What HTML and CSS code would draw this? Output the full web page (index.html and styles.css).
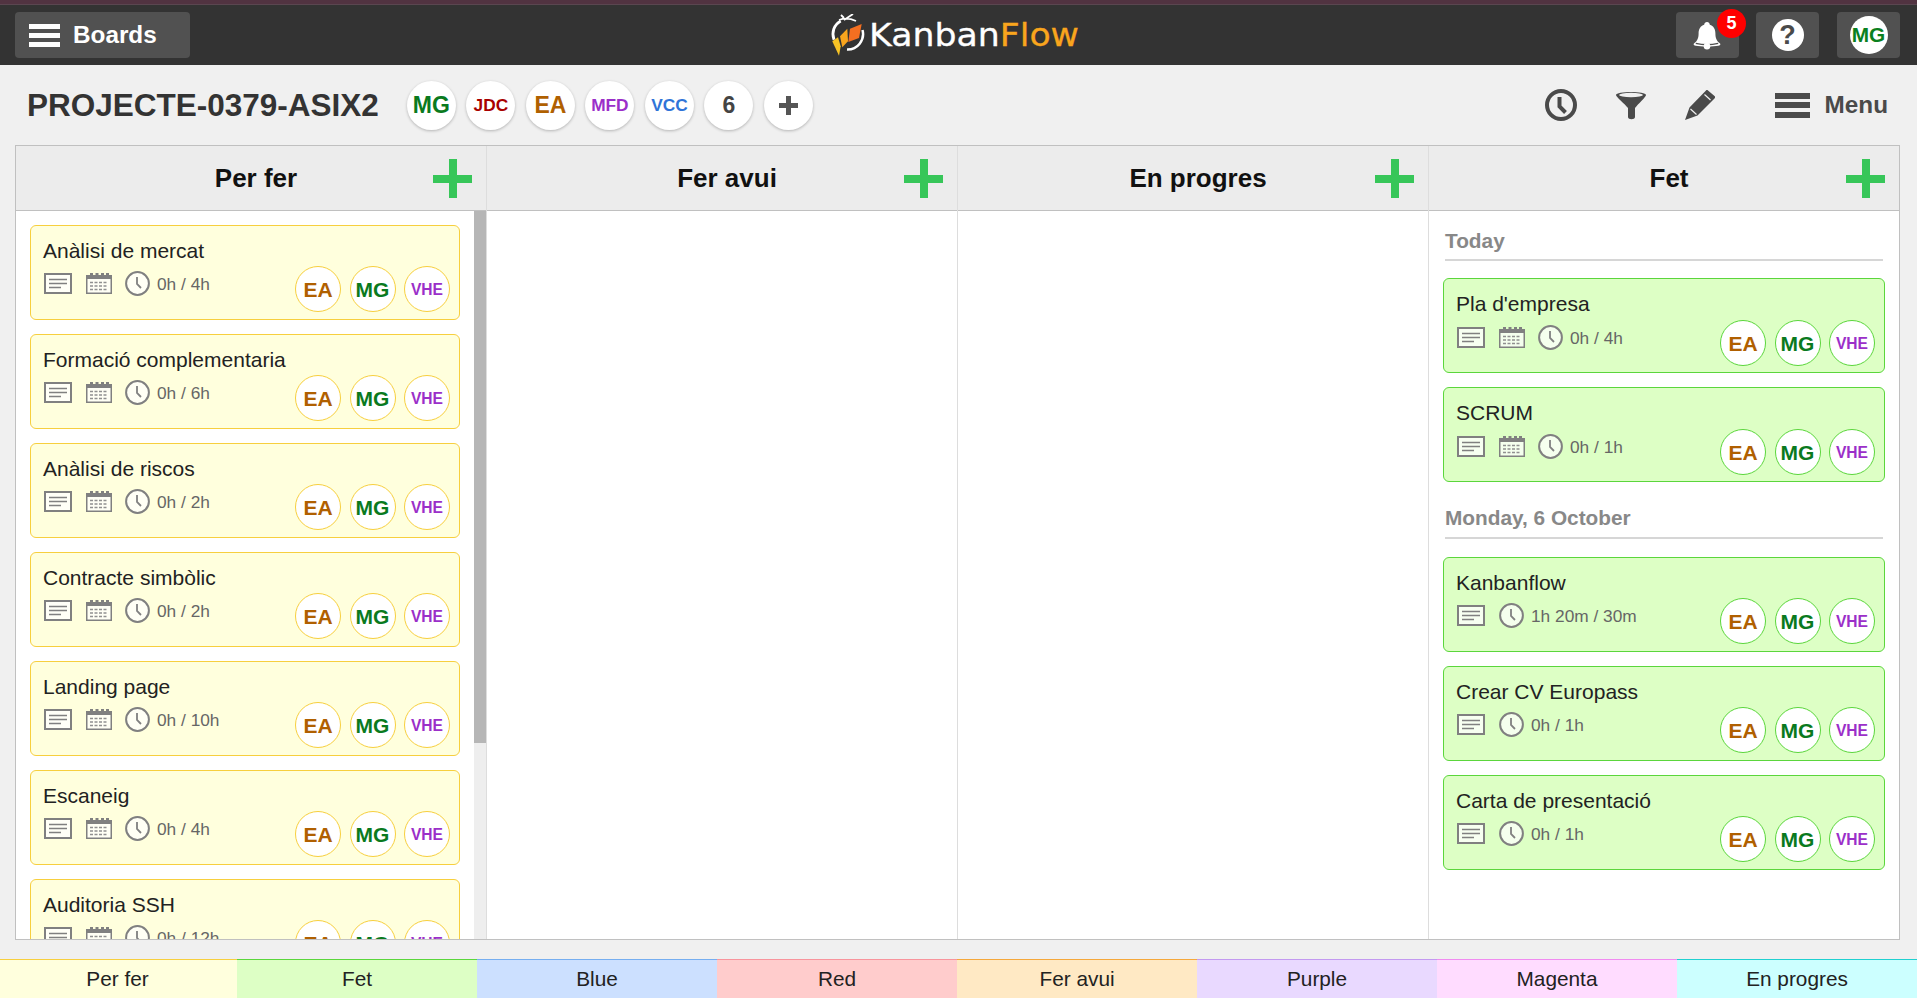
FILE: index.html
```html
<!DOCTYPE html>
<html lang="ca">
<head>
<meta charset="utf-8">
<title>KanbanFlow</title>
<link rel="stylesheet" href="styles.css">
</head>
<body>
<svg class="defs" width="0" height="0" aria-hidden="true">
  <symbol id="i-note" viewBox="0 0 28 21"><rect x="1" y="1" width="26" height="19" fill="#fff" fill-opacity=".75" stroke="#808080" stroke-width="2"/><path d="M5 6.500h18M5 10.500h18M5 14.500h12" stroke="#808080" stroke-width="1.600" fill="none"/></symbol>
  <symbol id="i-cal" viewBox="0 0 26 21"><rect x=".75" y="2.750" width="24.500" height="17.500" fill="#fff" fill-opacity=".7" stroke="#808080" stroke-width="1.500"/><rect x="1" y="2" width="24" height="4" fill="#808080"/><path d="M4 0h3v4H4zM9.500 0h3v4h-3zM15 0h3v4h-3zM20 0h3v4h-3z" fill="#808080"/><path d="M4 9.500h18M4 13h18M4 16.500h18" stroke="#909090" stroke-width="1.600" stroke-dasharray="3 1.500" fill="none"/></symbol>
  <symbol id="i-clock" viewBox="0 0 25 25"><circle cx="12.500" cy="12.500" r="11.400" fill="#fff" fill-opacity=".7" stroke="#808080" stroke-width="2"/><path d="M12 6v7l4 4" stroke="#808080" stroke-width="1.800" fill="none"/></symbol>
</svg>

<header class="topbar">
  <div class="top-left">
    <button class="top-btn boards-btn"><span class="burger burger-white"><i></i><i></i><i></i></span><span>Boards</span></button>
  </div>
  <div class="logo">
    <svg class="logo-mark" width="36" height="42" viewBox="0 0 36 42">
      <path d="M5 25.700A15 15 0 0 1 11.700 7" fill="none" stroke="#fff" stroke-width="2.800"/>
      <path d="M33.500 16A15.500 15.500 0 0 1 18 35.500" fill="none" stroke="#fff" stroke-width="2.500"/>
      <path d="M10 6Q18 3 27 7M15 6L24 0M15 4L12 1" fill="none" stroke="#fff" stroke-width="1.800"/>
      <path d="M3.300 27.300L9 23.300L11.700 32.300L10 41.700Z" fill="#f7c325"/>
      <path d="M11 22.300L18.300 14.700L19 27.300L13.300 33.300Z" fill="#f9a51d"/>
      <path d="M21 14.700L32.700 10L30 24L19.300 28Z" fill="#f36f21"/>
    </svg>
    <span class="logo-text">Kanban<span class="logo-flow">Flow</span></span>
  </div>
  <div class="top-right">
    <button class="top-btn icon-btn notif">
      <svg class="bell" width="28" height="30" viewBox="0 0 30 30"><path d="M15 1c2 0 3 1.500 3 3 4 1 6 5 6 9 0 5 1 8 5 11 1 1 0 2-2 2.500C22 27.500 8 27.500 3 26.500c-2-.5-3-1.500-2-2.500 4-3 5-6 5-11 0-4 2-8 6-9 0-1.500 1-3 3-3z" fill="#fff"/><path d="M3 24q12 3 24 0" stroke="#515151" stroke-width="1.500" fill="none"/><circle cx="15" cy="27" r="3.500" fill="#fff"/></svg>
      <span class="badge">5</span>
    </button>
    <button class="top-btn icon-btn"><span class="help">?</span></button>
    <button class="top-btn icon-btn me-btn"><span class="me">MG</span></button>
  </div>
</header>

<section class="toolbar">
  <h1 class="board-title">PROJECTE-0379-ASIX2</h1>
  <div class="members">
    <span class="member c-mg">MG</span>
    <span class="member small c-jdc">JDC</span>
    <span class="member c-ea">EA</span>
    <span class="member small c-vhe">MFD</span>
    <span class="member small c-vcc">VCC</span>
    <span class="member c-num">6</span>
    <span class="member c-num plus">
      <svg width="19" height="19" viewBox="0 0 19 19"><path d="M9.500 0v19M0 9.500h19" stroke="#555" stroke-width="5"/></svg>
    </span>
  </div>
  <div class="tools">
    <svg class="tool" width="32" height="32" viewBox="0 0 32 32"><circle cx="16" cy="16" r="14" fill="none" stroke="#4a4a4a" stroke-width="4"/><path d="M14.500 8v9.500l6 6" fill="none" stroke="#4a4a4a" stroke-width="4"/></svg>
    <svg class="tool" width="30" height="30" viewBox="0 0 30 30"><path d="M0 5C0 1 30 1 30 5c0 2-8 9-11 13v9c0 3-7 3-7 0v-9C9 14 0 7 0 5z" fill="#4a4a4a"/><ellipse cx="15" cy="5" rx="12" ry="2.200" fill="#f0f0f0"/></svg>
    <svg class="tool" width="30" height="30" viewBox="0 0 30 30"><path d="M23 .5l6.500 5.500c.8.8.8 1.600 0 2.400L12.500 25.500 0 30l4.500-12.500L21 .5c.6-.6 1.300-.6 2 0z" fill="#4a4a4a"/><path d="M19.500 4.500l6 5.500M5.500 19l6 5.500" stroke="#f0f0f0" stroke-width="1.200" fill="none"/></svg>
    <div class="menu"><span class="burger burger-dark"><i></i><i></i><i></i></span><span>Menu</span></div>
  </div>
</section>

<main class="board">
  <section class="col">
    <header class="col-head"><h2>Per fer</h2><span class="add"></span></header>
    <div class="col-body has-scroll">
      <div class="list">
        <article class="card yellow"><h3>Anàlisi de mercat</h3><div class="card-row"><div class="meta"><svg class="m-note"><use href="#i-note"/></svg><svg class="m-cal"><use href="#i-cal"/></svg><svg class="m-clock"><use href="#i-clock"/></svg><span>0h / 4h</span></div><div class="people"><span class="p c-ea">EA</span><span class="p c-mg">MG</span><span class="p vhe c-vhe">VHE</span></div></div></article>
        <article class="card yellow"><h3>Formació complementaria</h3><div class="card-row"><div class="meta"><svg class="m-note"><use href="#i-note"/></svg><svg class="m-cal"><use href="#i-cal"/></svg><svg class="m-clock"><use href="#i-clock"/></svg><span>0h / 6h</span></div><div class="people"><span class="p c-ea">EA</span><span class="p c-mg">MG</span><span class="p vhe c-vhe">VHE</span></div></div></article>
        <article class="card yellow"><h3>Anàlisi de riscos</h3><div class="card-row"><div class="meta"><svg class="m-note"><use href="#i-note"/></svg><svg class="m-cal"><use href="#i-cal"/></svg><svg class="m-clock"><use href="#i-clock"/></svg><span>0h / 2h</span></div><div class="people"><span class="p c-ea">EA</span><span class="p c-mg">MG</span><span class="p vhe c-vhe">VHE</span></div></div></article>
        <article class="card yellow"><h3>Contracte simbòlic</h3><div class="card-row"><div class="meta"><svg class="m-note"><use href="#i-note"/></svg><svg class="m-cal"><use href="#i-cal"/></svg><svg class="m-clock"><use href="#i-clock"/></svg><span>0h / 2h</span></div><div class="people"><span class="p c-ea">EA</span><span class="p c-mg">MG</span><span class="p vhe c-vhe">VHE</span></div></div></article>
        <article class="card yellow"><h3>Landing page</h3><div class="card-row"><div class="meta"><svg class="m-note"><use href="#i-note"/></svg><svg class="m-cal"><use href="#i-cal"/></svg><svg class="m-clock"><use href="#i-clock"/></svg><span>0h / 10h</span></div><div class="people"><span class="p c-ea">EA</span><span class="p c-mg">MG</span><span class="p vhe c-vhe">VHE</span></div></div></article>
        <article class="card yellow"><h3>Escaneig</h3><div class="card-row"><div class="meta"><svg class="m-note"><use href="#i-note"/></svg><svg class="m-cal"><use href="#i-cal"/></svg><svg class="m-clock"><use href="#i-clock"/></svg><span>0h / 4h</span></div><div class="people"><span class="p c-ea">EA</span><span class="p c-mg">MG</span><span class="p vhe c-vhe">VHE</span></div></div></article>
        <article class="card yellow"><h3>Auditoria SSH</h3><div class="card-row"><div class="meta"><svg class="m-note"><use href="#i-note"/></svg><svg class="m-cal"><use href="#i-cal"/></svg><svg class="m-clock"><use href="#i-clock"/></svg><span>0h / 12h</span></div><div class="people"><span class="p c-ea">EA</span><span class="p c-mg">MG</span><span class="p vhe c-vhe">VHE</span></div></div></article>
      </div>
      <div class="scrollbar"><div class="thumb"></div></div>
    </div>
  </section>
  <section class="col">
    <header class="col-head"><h2>Fer avui</h2><span class="add"></span></header>
    <div class="col-body"></div>
  </section>
  <section class="col">
    <header class="col-head"><h2>En progres</h2><span class="add"></span></header>
    <div class="col-body"></div>
  </section>
  <section class="col">
    <header class="col-head"><h2>Fet</h2><span class="add"></span></header>
    <div class="col-body done">
      <h4 class="group first">Today</h4>
      <article class="card green"><h3>Pla d'empresa</h3><div class="card-row"><div class="meta"><svg class="m-note"><use href="#i-note"/></svg><svg class="m-cal"><use href="#i-cal"/></svg><svg class="m-clock"><use href="#i-clock"/></svg><span>0h / 4h</span></div><div class="people"><span class="p c-ea">EA</span><span class="p c-mg">MG</span><span class="p vhe c-vhe">VHE</span></div></div></article>
      <article class="card green"><h3>SCRUM</h3><div class="card-row"><div class="meta"><svg class="m-note"><use href="#i-note"/></svg><svg class="m-cal"><use href="#i-cal"/></svg><svg class="m-clock"><use href="#i-clock"/></svg><span>0h / 1h</span></div><div class="people"><span class="p c-ea">EA</span><span class="p c-mg">MG</span><span class="p vhe c-vhe">VHE</span></div></div></article>
      <h4 class="group">Monday, 6 October</h4>
      <article class="card green"><h3>Kanbanflow</h3><div class="card-row"><div class="meta"><svg class="m-note"><use href="#i-note"/></svg><svg class="m-clock"><use href="#i-clock"/></svg><span>1h 20m / 30m</span></div><div class="people"><span class="p c-ea">EA</span><span class="p c-mg">MG</span><span class="p vhe c-vhe">VHE</span></div></div></article>
      <article class="card green"><h3>Crear CV Europass</h3><div class="card-row"><div class="meta"><svg class="m-note"><use href="#i-note"/></svg><svg class="m-clock"><use href="#i-clock"/></svg><span>0h / 1h</span></div><div class="people"><span class="p c-ea">EA</span><span class="p c-mg">MG</span><span class="p vhe c-vhe">VHE</span></div></div></article>
      <article class="card green"><h3>Carta de presentació</h3><div class="card-row"><div class="meta"><svg class="m-note"><use href="#i-note"/></svg><svg class="m-clock"><use href="#i-clock"/></svg><span>0h / 1h</span></div><div class="people"><span class="p c-ea">EA</span><span class="p c-mg">MG</span><span class="p vhe c-vhe">VHE</span></div></div></article>
    </div>
  </section>
</main>

<footer class="legend">
  <div class="lg l1">Per fer</div>
  <div class="lg l2">Fet</div>
  <div class="lg l3">Blue</div>
  <div class="lg l4">Red</div>
  <div class="lg l5">Fer avui</div>
  <div class="lg l6">Purple</div>
  <div class="lg l7">Magenta</div>
  <div class="lg l8">En progres</div>
</footer>
</body>
</html>
```

FILE: styles.css
```css
* { box-sizing: border-box; }
html, body { height: 100%; margin: 0; }
body {
  display: flex;
  flex-direction: column;
  overflow: hidden;
  background: #f0f0f0;
  font-family: "Liberation Sans", Arial, sans-serif;
  color: #222;
}
.defs { position: absolute; }
h1, h2, h3, h4 { margin: 0; }

/* top bar */
.topbar {
  flex: none;
  height: 65px;
  display: flex;
  align-items: flex-start;
  background: #333;
  border-top: 4px solid #513341;
  padding: 8px 17px 0 15px;
  box-shadow: inset 0 1px 0 #5a4650;
}
.top-left, .top-right { flex: 1 1 0; display: flex; align-items: center; }
.top-right { justify-content: flex-end; gap: 17px; }
.top-btn {
  height: 46px;
  border: 0;
  padding: 0;
  border-radius: 4px;
  background: #515151;
  color: #fff;
  font: bold 24.300px "Liberation Sans", Arial, sans-serif;
  display: flex;
  align-items: center;
}
.boards-btn { width: 175px; padding-left: 14px; gap: 13px; }
.icon-btn { width: 63px; justify-content: center; position: relative; }
.me-btn { margin-left: 1px; }
.bell { margin-right: 1px; }
.burger { display: flex; flex-direction: column; justify-content: space-between; }
.burger i { display: block; }
.burger-white { width: 31px; height: 23px; }
.burger-white i { height: 5px; background: #fff; }
.burger-dark { width: 35px; height: 25px; }
.burger-dark i { height: 6px; background: #4a4a4a; }
.logo { display: flex; align-items: center; gap: 4px; margin-left: -12px; margin-right: 12px; height: 46px; }
.logo-text {
  display: inline-block;
  font-family: "DejaVu Sans", sans-serif;
  font-size: 32px;
  color: #fff;
  font-weight: 400;
  -webkit-text-stroke: .3px currentColor;
  transform: scaleX(1.085);
  transform-origin: left center;
}
.logo-flow { color: #f9a51d; }
.badge {
  position: absolute;
  top: -3px;
  right: -7px;
  width: 29px;
  height: 29px;
  border-radius: 50%;
  background: #f00;
  color: #fff;
  font-size: 18px;
  line-height: 29px;
  text-align: center;
}
.help {
  width: 32px;
  height: 32px;
  border-radius: 50%;
  background: #fff;
  color: #4a4a4a;
  font-size: 27px;
  line-height: 32px;
  text-align: center;
}
.me {
  width: 38px;
  height: 38px;
  border-radius: 50%;
  background: #fff;
  color: #0a8020;
  font-size: 20.800px;
  line-height: 38px;
  text-align: center;
}

/* toolbar */
.toolbar {
  flex: none;
  height: 80px;
  display: flex;
  align-items: center;
  padding: 0 29px 0 27px;
}
.board-title { font-size: 31.500px; color: #333; font-weight: bold; white-space: nowrap; }
.members { display: flex; gap: 10.500px; margin-left: 28px; }
.member {
  width: 49px;
  height: 49px;
  border-radius: 50%;
  background: #fff;
  box-shadow: 0 1px 3px rgba(0, 0, 0, .25);
  display: flex;
  align-items: center;
  justify-content: center;
  font-weight: bold;
  font-size: 23px;
}
.member.small { font-size: 17.300px; }
.tools { margin-left: auto; display: flex; align-items: center; gap: 39px; }
.tool { display: block; }
.menu {
  margin-left: 21px;
  display: flex;
  align-items: center;
  gap: 15px;
  font-size: 24.300px;
  font-weight: bold;
  color: #4a4a4a;
}
.c-mg { color: #0a7a1e; }
.c-jdc { color: #a80000; }
.c-ea { color: #b06000; }
.c-vhe { color: #9b2fc9; }
.c-vcc { color: #2f74d8; }
.c-num { color: #444; }

/* board */
.board {
  flex: none;
  height: 795px;
  margin: 0 17px 0 15px;
  display: grid;
  grid-template-columns: 471px 471px 471px 470px;
  border: 1px solid #c0c0c0;
  background: #fff;
  overflow: hidden;
}
.col { display: flex; flex-direction: column; min-width: 0; min-height: 0; border-right: 1px solid #ddd; }
.col:last-child { border-right: 0; }
.col-head {
  flex: none;
  height: 65px;
  background: #ececec;
  border-bottom: 1px solid #c0c0c0;
  display: flex;
  align-items: center;
  justify-content: center;
  position: relative;
  padding: 0 0 0 10px;
}
.col-head h2 { font-size: 26px; color: #111; }
.add {
  position: absolute;
  right: 14px;
  top: 13px;
  width: 39px;
  height: 39px;
  background:
    linear-gradient(#37c659, #37c659) center / 100% 8px no-repeat,
    linear-gradient(#37c659, #37c659) center / 8px 100% no-repeat;
  border-radius: 2px;
}
.col-body { flex: 1; min-height: 0; overflow: hidden; position: relative; }
.has-scroll { display: flex; }
.list {
  flex: 1;
  min-width: 0;
  padding: 14px 14px 0;
  display: flex;
  flex-direction: column;
  gap: 14px;
}
.list .card { flex: none; }
.scrollbar { flex: none; width: 12px; background: #eee; }
.thumb { height: 532px; background: #b6b6b6; }

/* cards */
.card {
  height: 95px;
  border: 1px solid;
  border-radius: 6px;
  padding: 0 9px 0 12px;
}
.yellow { background: #ffffdd; border-color: #f7cf3e; }
.green { background: #ddffc5; border-color: #5bd63c; }
.card h3 {
  font-size: 21px;
  font-weight: normal;
  line-height: 24px;
  padding-top: 13px;
  height: 40px;
  color: #222;
  white-space: nowrap;
}
.card-row { display: flex; justify-content: space-between; align-items: flex-start; }
.group.first + .card .card-row,
.group.first + .card + .card .card-row { padding-top: 1px; }
.meta {
  display: flex;
  align-items: center;
  margin-top: 5px;
  height: 25px;
  font-size: 17.300px;
  color: #666;
}
.meta span { margin-top: 2px; }
.m-note { width: 28px; height: 21px; margin-left: 1px; margin-right: 14px; }
.m-cal { width: 26px; height: 21px; margin-right: 13px; }
.m-clock { width: 25px; height: 25px; margin-right: 7px; }
.people { display: flex; gap: 8.500px; }
.p {
  width: 46px;
  height: 46px;
  border-radius: 50%;
  background: #fff;
  border: 1px solid;
  padding-top: 1px;
  display: flex;
  align-items: center;
  justify-content: center;
  font-size: 21px;
  font-weight: bold;
}
.yellow .p { border-color: #f7cf3e; }
.green .p { border-color: #5bd63c; }
.p.vhe { font-size: 15.600px; }

/* done column */
.done { padding: 0 14px; }
.group {
  margin: 24px 2px 18px;
  height: 33px;
  border-bottom: 2px solid #d6d6d6;
  font-size: 20.800px;
  line-height: 24px;
  color: #888;
}
.group.first { margin-top: 18px; height: 32px; margin-bottom: 17px; }
.done .card + .card { margin-top: 14px; }

/* legend */
.legend {
  flex: none;
  margin-top: 19px;
  height: 39px;
  display: grid;
  grid-template-columns: 237px repeat(7, 240px);
}
.lg {
  border-top: 1px solid;
  text-align: center;
  font-size: 20.800px;
  line-height: 38px;
  color: #222;
}
.l1 { background: #ffffdd; border-color: #f7cf3e; padding-right: 2px; }
.l2 { background: #ddffc5; border-color: #5bd63c; }
.l3 { background: #cce0ff; border-color: #76aef0; }
.l4 { background: #ffcccc; border-color: #f8959d; }
.l5 { background: #ffe9c4; border-color: #f5a83c; }
.l6 { background: #e9d9ff; border-color: #c39af0; }
.l7 { background: #ffdcff; border-color: #f08cf0; }
.l8 { background: #ccffff; border-color: #20d0d0; }
```
